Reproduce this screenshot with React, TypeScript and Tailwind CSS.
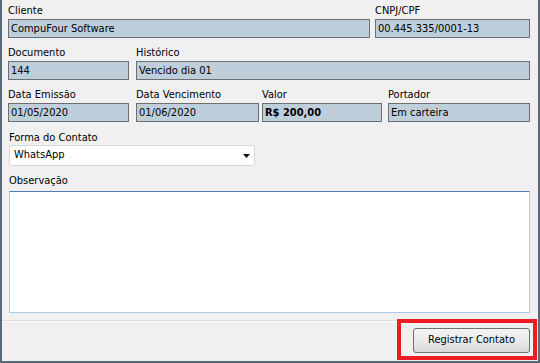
function Field({ label, value, w, bold }: { label: string; value: string; w: string; bold?: boolean }) {
  return (
    <div className={`flex flex-col ${w}`}>
      <span className="h-[13px] leading-[13px] text-black">{label}</span>
      <div
        className={`mt-[2px] flex h-[19px] items-center border border-[#6b6e72] bg-[#bfcedb] pl-[2px] leading-[13px] text-black ${
          bold ? "font-bold" : ""
        }`}
      >
        {value}
      </div>
    </div>
  );
}

export default function App() {
  return (
    <div
      className="relative flex h-[363px] w-[540px] flex-col border-x-2 border-b-2 border-[#5b6878] bg-[#f0f0f0] text-[11px] font-stretch-semi-condensed"
      style={{ fontFamily: '"DejaVu Sans Condensed", "DejaVu Sans", "Liberation Sans", sans-serif' }}
    >
      <div className="flex flex-1 flex-col pl-[6px] pr-[6px] pt-[4px]">
        <div className="flex gap-[5px]">
          <Field label="Cliente" value="CompuFour Software" w="w-[362px]" />
          <Field label="CNPJ/CPF" value="00.445.335/0001-13" w="w-[155px]" />
        </div>

        <div className="mt-[8px] flex gap-[7px]">
          <Field label="Documento" value="144" w="w-[121px]" />
          <Field label="Histórico" value="Vencido dia 01" w="w-[394px]" />
        </div>

        <div className="mt-[8px] flex">
          <Field label="Data Emissão" value="01/05/2020" w="w-[121px]" />
          <div className="w-[7px]" />
          <Field label="Data Vencimento" value="01/06/2020" w="w-[123px]" />
          <div className="w-[3px]" />
          <Field label="Valor" value="R$ 200,00" w="w-[120px]" bold />
          <div className="w-[6px]" />
          <Field label="Portador" value="Em carteira" w="w-[142px]" />
        </div>

        <div className="mt-[9px] flex flex-col pl-[1px]">
          <span className="h-[13px] leading-[13px] text-black">Forma do Contato</span>
          <div className="mt-[1px] flex h-[21px] w-[246px] items-center justify-between rounded-[2px] border border-[#d9d9d9] bg-white pl-[4px] pr-[4px] text-black">
            <span>WhatsApp</span>
            <svg width="7" height="4" viewBox="0 0 7 4">
              <path d="M0 0h7L3.5 4z" fill="#111" />
            </svg>
          </div>
        </div>

        <div className="mt-[8px] flex flex-col pl-[1px]">
          <span className="h-[13px] leading-[13px] text-black">Observação</span>
          <div className="mt-[4px] h-[122px] w-[521px] border border-[#aacbe6] border-t-[#4f7fae] bg-white" />
        </div>
      </div>

      <div className="h-px bg-[#dcdcdc]" />
      <div className="h-px bg-white" />
      <div className="flex h-[39px] items-center justify-end bg-[#f0f0f0] pr-[8px]">
        <button className="mt-[-2px] h-[25px] w-[117px] rounded-[3px] border border-[#707070] bg-gradient-to-b from-[#f3f3f3] via-[#ebebeb] to-[#d8d8d8] text-[11px] text-black">
          Registrar Contato
        </button>
      </div>

      <div className="pointer-events-none absolute left-[395px] top-[319px] h-[41px] w-[140px] border-4 border-[#ed1c24]" />
    </div>
  );
}
